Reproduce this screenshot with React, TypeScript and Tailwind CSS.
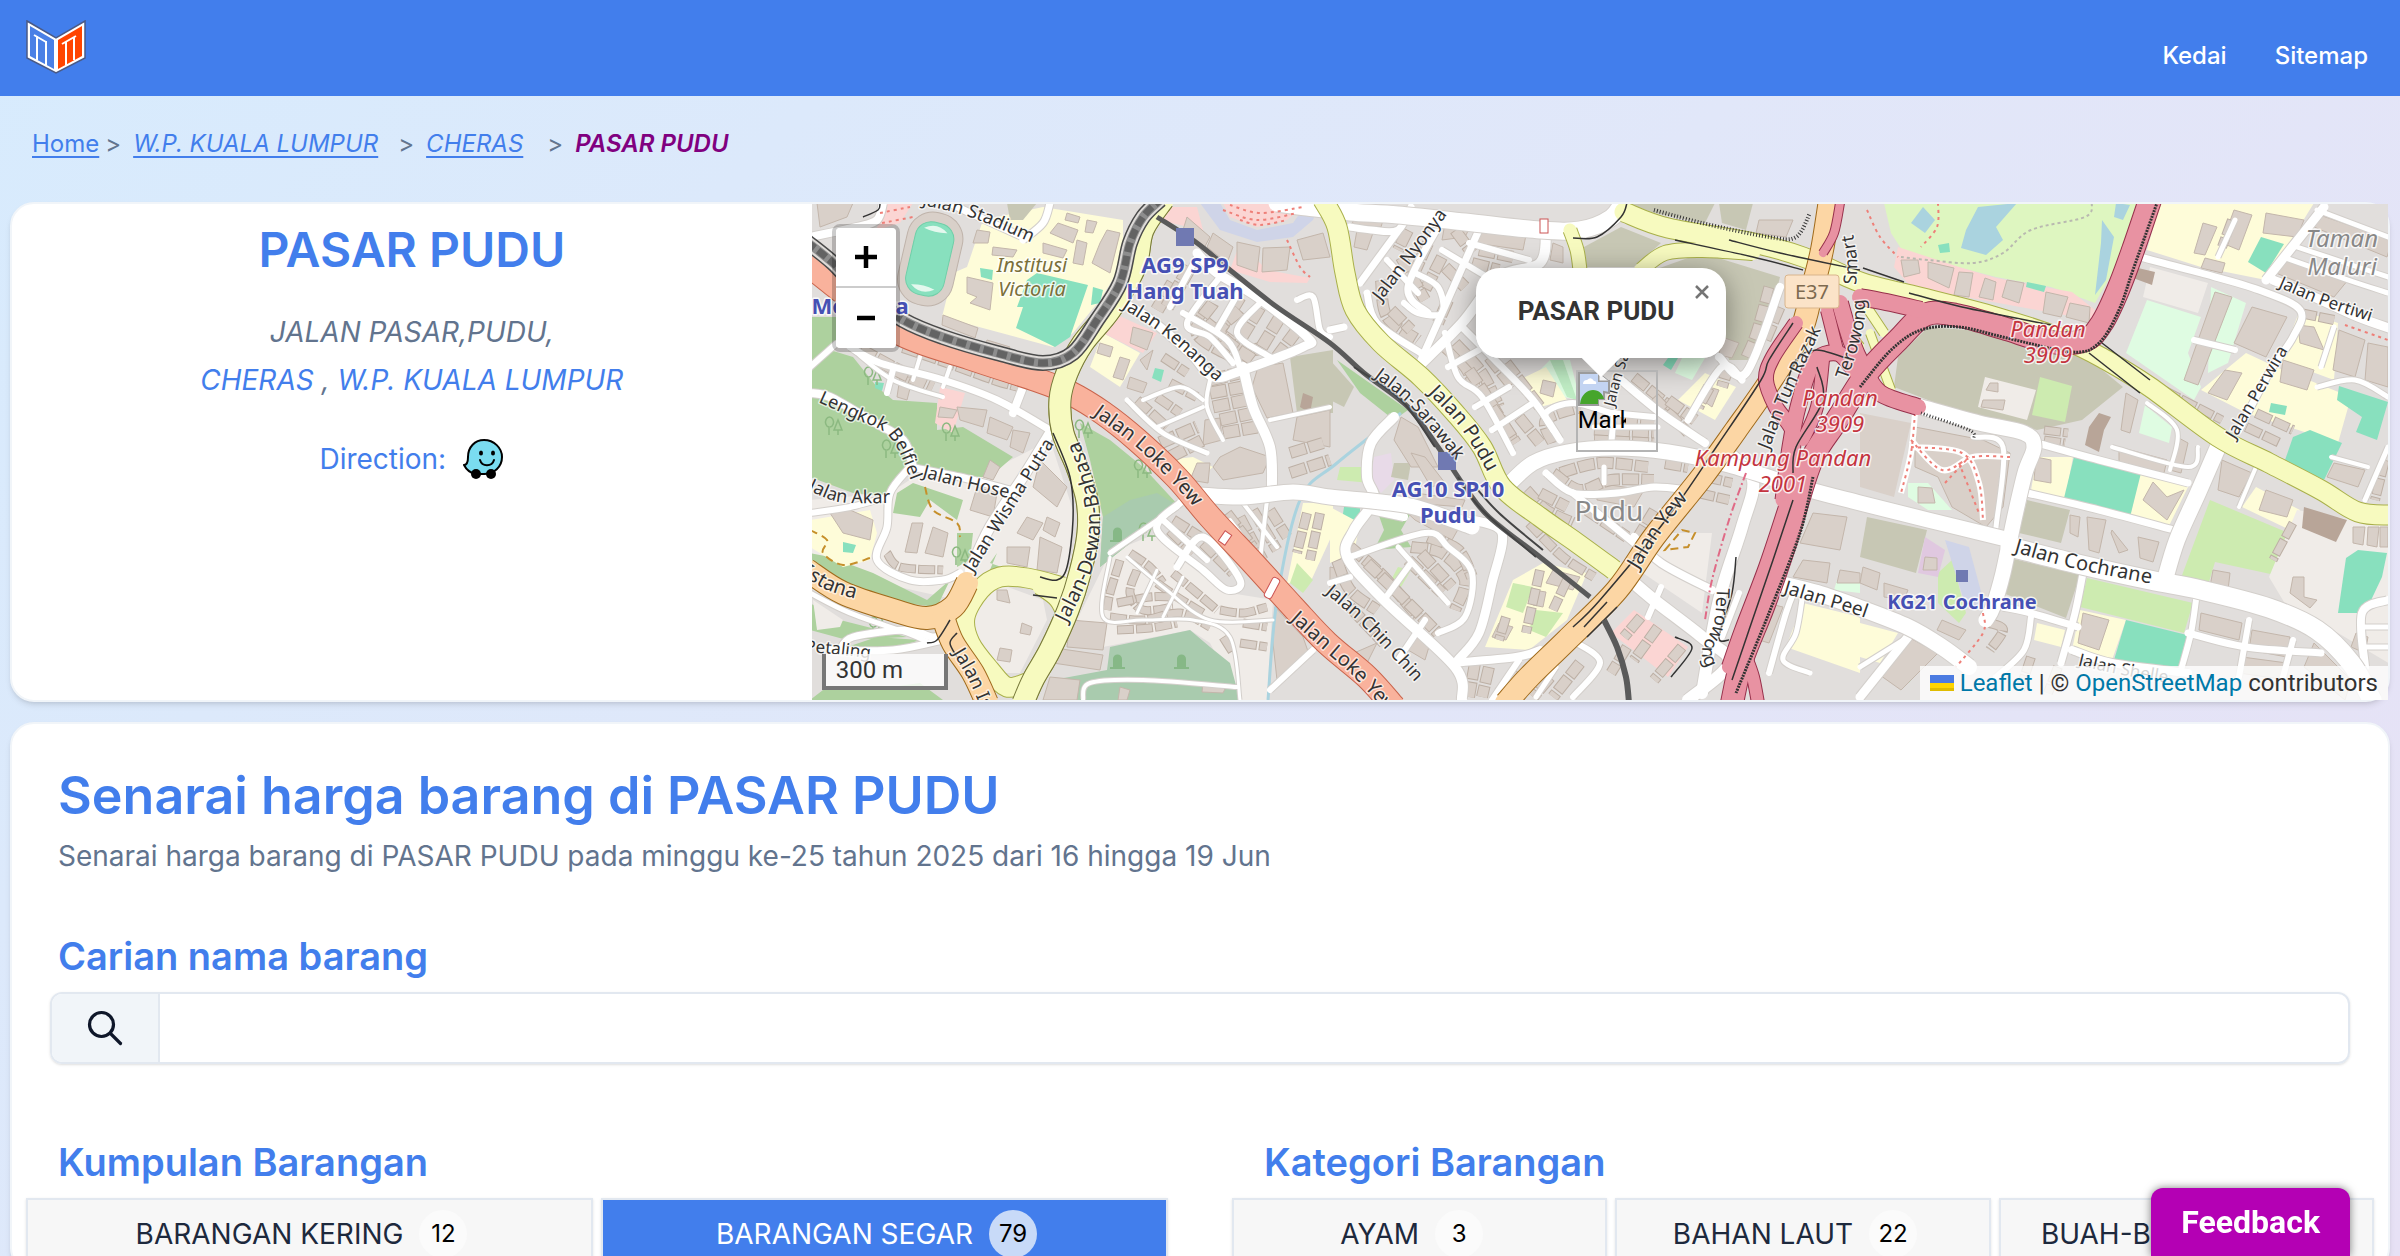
type Pt = [number, number];

const sheet =
  (originX: number, scaleX: number) =>
  (points: string): Pt[] =>
    points.split(" ").map((p) => {
      const [x, y] = p.split(",").map(Number);
      return [Math.round(originX + x * scaleX), Math.round(y / 3 - 4)];
    });

// The map is drawn from three adjoining sheets: west, centre and east.
const w = sheet(-2, 0.3333);
const m = sheet(518, 0.338);
const e = sheet(1048, 0.3412);

const poly = (pts: Pt[]) => "M" + pts.map((p) => p.join(" ")).join("L") + "Z";

const curve = (pts: Pt[]) => {
  let d = `M${pts[0][0]} ${pts[0][1]}`;
  for (let i = 0; i < pts.length - 1; i++) {
    const p0 = pts[i - 1] ?? pts[i];
    const p1 = pts[i];
    const p2 = pts[i + 1];
    const p3 = pts[i + 2] ?? p2;
    d += `C${p1[0] + (p2[0] - p0[0]) / 6} ${p1[1] + (p2[1] - p0[1]) / 6} ${p2[0] - (p3[0] - p1[0]) / 6} ${p2[1] - (p3[1] - p1[1]) / 6} ${p2[0]} ${p2[1]}`;
  }
  return d;
};

const PARK = "#add19e";
const CEMETERY = "#a9cbae";
const SCHOOL = "#fefcd9";
const PITCH = "#88e0be";
const BROWN = "#c7c7b4";
const GRASS = "#cdebb0";
const GARDEN = "#dffce2";
const GOLF = "#def6c0";
const WATER = "#aad3df";
const PINK = "#fbd5d3";
const PLAIN = "#f0ece8";
const BLOCK = "#d9d0c9";

const areas: [string, Pt[]][] = [
  [PLAIN, w("0,900 240,880 330,820 500,830 620,770 720,720 790,930 770,1130 560,1110 440,1200 0,1100")],
  [PLAIN, w("560,1150 700,1200 710,1260 630,1420 570,1420 490,1330 490,1240")],
  [PLAIN, w("900,1060 1040,1000 1260,1180 1390,1200 1370,1500 1290,1500 1200,1330 1140,1290 880,1340 800,1260")],
  [PARK, w("0,350 80,350 80,440 0,500")],
  [PARK, w("60,450 130,470 200,560 250,600 380,610 380,690 460,680 610,770 540,830 500,830 330,800 290,820 240,890 130,880 0,830 0,600 0,520")],
  [PARK, w("810,670 900,720 1000,800 1110,920 1000,1000 870,1100 880,950 840,780")],
  [CEMETERY, w("960,900 1040,880 1110,920 1000,1000 870,1100 880,950")],
  [CEMETERY, w("1140,1290 1200,1340 1260,1390 1290,1500 700,1500 730,1440 890,1410 900,1340")],
  [PARK, w("0,1060 60,1070 190,1120 350,1200 420,1140 380,1220 200,1200 0,1110")],
  [PARK, w("0,1210 90,1260 290,1310 110,1320 0,1290")],
  [PARK, w("110,1340 200,1310 330,1320 240,1350")],
  [PARK, w("40,1470 180,1470 330,1450 400,1500 0,1500")],
  [PARK, w("260,880 310,850 460,900 440,960 360,900 330,950 250,940")],
  [PARK, w("440,1000 490,1000 480,1080 440,1100")],
  [PARK, w("540,1090 600,1110 700,1130 640,1120 530,1130 560,1060")],
  [PLAIN, w("10,1200 100,1260 90,1280 20,1290")],
  [SCHOOL, w("470,200 520,60 700,20 940,60 940,190 870,300 790,400 730,440 395,350 430,220")],
  [SCHOOL, w("880,400 990,460 930,560 840,500")],
  [SCHOOL, w("0,960 180,930 200,1000 180,1080 100,1100 0,1040")],
  [SCHOOL, w("1070,780 1150,770 1210,800 1150,850 1100,830")],
  [PITCH, w("680,220 835,255 780,410 735,440 617,385 640,320 622,320 650,240")],
  [PITCH, w("850,260 880,270 870,310 842,315")],
  [PITCH, w("510,205 550,210 545,240 512,230")],
  [PITCH, w("1035,505 1062,510 1052,545 1026,535")],
  [PITCH, w("100,1025 138,1035 130,1060 98,1055")],
  [PITCH, w("195,545 222,550 215,572 195,565")],
  [PINK, w("1070,20 1160,20 1180,90 1040,60")],
  [PINK, w("1290,130 1370,210 1500,235 1490,250 1380,245 1260,210")],
  [PINK, w("390,560 465,580 430,700 375,670")],
  [PINK, w("910,340 1040,400 1000,460 880,400")],
  [PINK, w("210,10 310,10 270,70 200,90")],
  [BROWN, w("1440,470 1570,450 1570,640 1460,640")],
  [BROWN, w("590,10 680,10 640,60 600,60")],
  [SCHOOL, w("1480,910 1570,910 1570,1000 1500,1150 1430,1150")],
  [GRASS, w("1460,1090 1510,1140 1480,1180 1440,1150")],
  [BROWN, m("0,480 70,560 40,620 0,600")],
  [PARK, m("20,480 230,630 190,660 90,580")],
  ["#e8dae8", m("130,770 180,760 190,840 150,880 120,840")],
  [BROWN, m("190,790 240,790 230,840 180,830")],
  [GRASS, m("30,800 110,800 120,850 20,840")],
  [PITCH, m("40,920 90,920 90,965 35,960")],
  [SCHOOL, m("0,920 90,970 70,1060 0,1090")],
  [PARK, m("140,930 240,940 210,990 240,1040 130,1050 160,990")],
  [GRASS, m("200,1100 240,1110 210,1160 180,1140")],
  [GARDEN, m("650,480 710,480 740,600 690,590 620,510")],
  ["#bfecc4", m("650,480 690,480 730,600 700,590")],
  [SCHOOL, m("560,540 640,500 700,600 620,620")],
  [SCHOOL, m("1110,520 1200,560 1140,660 1030,600")],
  [PITCH, m("1000,475 1030,475 1010,510 985,495")],
  [GARDEN, m("1040,475 1110,475 1070,540 1020,520")],
  [BROWN, m("750,140 860,80 980,130 900,200 760,200")],
  [BROWN, m("880,10 1140,10 1110,70 960,40")],
  [BROWN, m("960,210 1100,160 1330,230 1270,480 1180,480 1160,400")],
  [BROWN, m("1150,10 1250,10 1230,90 1160,70")],
  [SCHOOL, m("630,1090 760,1120 700,1260 590,1350 460,1340 540,1140")],
  [GRASS, m("540,1150 600,1160 570,1240 520,1220")],
  [GRASS, m("610,1230 690,1240 640,1310 590,1290")],
  [PINK, m("900,1230 1060,1340 1000,1430 830,1300")],
  [PLAIN, m("900,1000 1130,1000 1100,1240 900,1100")],
  [SCHOOL, m("1400,1210 1568,1250 1568,1420 1350,1340")],
  [GARDEN, m("1500,1140 1568,1150 1568,1180 1490,1170")],
  [GOLF, e("70,10 860,10 690,310 560,260 400,230 130,160 90,100")],
  [WATER, e("185,20 220,60 190,100 150,70")],
  [WATER, e("345,20 460,10 400,80 420,120 370,165 295,145 310,90")],
  [WATER, e("710,60 745,110 720,240 690,285 705,130")],
  [WATER, e("750,10 790,15 770,60 745,50")],
  [PITCH, e("230,135 260,130 265,155 235,160")],
  [PINK, e("110,140 290,200 400,235 620,275 690,330 680,360 520,330 150,260 100,200")],
  [PITCH, e("490,245 545,258 540,276 487,262")],
  [SCHOOL, e("880,10 1330,10 1190,240 1000,200 840,150")],
  [PITCH, e("1175,112 1243,132 1190,220 1138,185")],
  [GARDEN, e("840,300 1000,350 960,460 1000,560 980,600 780,460")],
  [GARDEN, e("1030,260 1130,310 1080,490 1020,520")],
  [PLAIN, e("850,200 1020,250 990,340 830,290")],
  [SCHOOL, e("1130,460 1220,500 1440,590 1400,730 1130,640 1000,570")],
  [SCHOOL, e("1290,330 1400,370 1390,540 1230,480")],
  [PITCH, e("1405,558 1548,605 1515,720 1455,695 1470,650 1398,600")],
  [PITCH, e("1320,690 1412,730 1360,840 1245,780 1270,710")],
  [PITCH, e("1205,608 1250,618 1245,645 1200,635")],
  [BROWN, e("200,380 430,400 560,450 640,450 770,560 650,660 520,690 300,640 100,560 110,470")],
  [PLAIN, e("365,530 515,570 490,660 345,620")],
  [GRASS, e("528,532 620,558 600,665 503,645")],
  [GARDEN, e("835,615 915,680 905,730 818,700")],
  [SCHOOL, e("520,770 625,770 600,900 500,870")],
  [SCHOOL, e("820,820 960,860 900,990 790,950")],
  [PITCH, e("628,770 825,820 790,950 598,895")],
  [BROWN, e("490,900 615,930 590,1030 465,1000")],
  [BROWN, e("20,950 195,990 165,1120 0,1070")],
  [BROWN, e("440,1075 645,1125 605,1255 420,1180")],
  [GRASS, e("1025,900 1285,1010 1215,1125 1040,1085 1020,1155 940,1135")],
  [GRASS, e("665,1135 975,1210 950,1300 645,1220")],
  [SCHOOL, e("645,1230 780,1260 740,1380 620,1350")],
  [PITCH, e("780,1260 958,1305 930,1420 745,1380")],
  [SCHOOL, e("1160,860 1290,930 1260,990 1120,920")],
  [PLAIN, e("1280,930 1568,980 1568,1400 1400,1300 1250,1220 1200,1130")],
  [PITCH, e("1460,1050 1545,1060 1530,1130 1480,1240 1402,1240 1425,1075")],
  [GRASS, e("230,1120 270,1080 310,1240 290,1270 230,1210")],
  ["#e0c8e0", e("190,1010 250,1050 230,1130 170,1120")],
  [GARDEN, e("140,850 200,850 270,930 200,930 140,890")],
  [SCHOOL, e("0,1270 110,1300 60,1390 0,1370")],
  [SCHOOL, e("520,1270 600,1290 590,1340 510,1320")],
  ["#bff0c8", e("140,1380 185,1395 145,1450 105,1430")],
  ["#cfd4e8", e("250,1020 320,1040 370,1230 310,1220")],
  [BLOCK, e("0,640 150,670 100,890 0,860")],
  ["#cfd4e8", w("1170,10 1230,90 1340,125 1450,110 1510,60 1530,10 1490,10 1450,70 1340,90 1260,60 1230,10")],
  [PINK, w("1240,10 1490,10 1430,60 1340,80 1260,50")],
];

const buildings: Pt[][] = [
  w("20,10 130,10 110,50 30,80"),
  w("500,90 540,95 535,130 490,130"),
  w("550,140 620,150 610,170 545,165"),
  w("745,70 805,90 790,130 720,100"),
  w("700,130 770,150 760,175 700,160"),
  w("470,230 550,250 540,330 480,310 500,290 470,280"),
  w("800,120 830,130 820,195 790,190"),
  w("890,90 930,100 900,220 845,190 870,130"),
  w("830,60 860,65 850,100 825,95"),
  w("770,40 810,50 805,70 765,60"),
  w("400,345 505,385 495,415 395,375"),
  w("530,420 600,440 590,460 525,445"),
  w("1130,50 1200,110 1180,150 1120,90"),
  w("1210,100 1270,140 1250,190 1190,140"),
  w("1280,125 1350,140 1340,215 1280,195"),
  w("1360,145 1440,140 1430,210 1355,215"),
  w("1460,120 1540,100 1560,170 1480,180"),
  w("1345,500 1420,490 1450,640 1370,655 1325,560"),
  w("1185,660 1230,655 1235,720 1180,735"),
  w("1230,770 1290,740 1380,770 1360,820 1240,840 1210,800"),
  w("1160,790 1200,790 1195,850 1140,840"),
  w("1460,650 1560,630 1560,740 1450,720"),
  w("970,380 1030,400 1010,450 960,430"),
  w("990,480 1030,450 1010,510"),
  w("960,530 1010,550 1000,580 950,565"),
  w("930,470 960,480 940,540 910,530"),
  w("870,430 910,440 900,470 860,460"),
  w("440,620 530,630 520,680 450,660"),
  w("540,650 610,680 590,720 530,700"),
  w("610,690 660,700 640,760 600,740"),
  w("390,620 440,630 430,655 385,650"),
  w("500,860 560,880 550,950 480,930"),
  w("540,780 570,800 550,840 520,830"),
  w("690,780 770,860 740,920 670,860"),
  w("650,950 700,970 670,1020 620,1000"),
  w("710,950 750,970 735,1010 700,990"),
  w("590,1040 660,1040 650,1100 590,1090"),
  w("690,1010 755,1040 740,1120 680,1110"),
  w("305,970 340,970 320,1060 285,1055"),
  w("370,980 415,1000 400,1070 345,1060"),
  w("60,940 120,930 190,960 180,1020 100,1000"),
  w("270,530 310,530 290,600 260,590"),
  w("780,1260 890,1270 880,1350 770,1340"),
  w("735,1345 880,1365 870,1410 730,1390"),
  w("720,1430 810,1440 800,1500 700,1500"),
  w("1395,1220 1480,1310 1500,1370 1400,1440 1390,1330"),
  w("560,1170 590,1170 600,1210 560,1200"),
  w("635,1270 665,1280 660,1305 630,1300"),
  w("570,1345 605,1350 600,1385 560,1380"),
  w("930,1460 960,1470 950,1500 925,1500"),
  w("1180,1450 1250,1455 1240,1480 1175,1475"),
  m("70,50 160,50 150,80 65,75"),
  m("80,90 130,90 110,150 70,140"),
  m("340,70 420,70 400,110 330,120"),
  m("440,90 580,105 570,150 430,130"),
  m("660,130 690,140 690,190 650,180"),
  m("210,650 260,680 320,800 240,800 190,720"),
  m("240,760 280,770 340,850 300,860"),
  m("210,920 400,950 360,1020 250,960"),
  m("250,880 400,900 390,920 245,910"),
  m("1430,940 1530,950 1510,1050 1390,1030"),
  m("1400,1080 1480,1090 1470,1150 1370,1130"),
  m("1510,1110 1568,1120 1568,1150 1500,1150"),
  m("1290,1210 1340,1220 1300,1330 1270,1320"),
  m("250,1290 300,1320 280,1380 230,1350"),
  m("0,1100 40,1110 10,1180 0,1180"),
  m("70,1360 140,1330 110,1390"),
  m("1160,410 1210,430 1190,475 1150,465"),
  m("1270,60 1370,60 1350,110 1260,100"),
  m("790,850 930,870 900,920 790,900"),
  m("630,540 670,550 660,590 620,580"),
  m("1120,560 1150,570 1130,620 1100,600"),
  m("660,1110 740,1130 720,1170 640,1150"),
  m("600,1170 640,1175 630,1220 600,1215"),
  m("500,1270 540,1280 520,1320 480,1310"),
  e("120,180 170,180 175,220 130,230"),
  e("200,185 275,205 260,265 200,235"),
  e("290,215 330,220 320,290 275,285"),
  e("365,235 400,245 390,300 350,290"),
  e("430,240 480,250 465,310 415,290"),
  e("545,275 610,290 590,350 535,340"),
  e("615,310 675,320 670,370 605,350"),
  e("1040,275 1090,290 990,555 950,540"),
  e("1150,320 1250,350 1190,470 1095,430"),
  e("1405,390 1480,420 1450,530 1385,510"),
  e("1490,430 1548,440 1548,560 1480,540"),
  e("1070,510 1120,520 1075,600 1020,580"),
  e("1240,480 1330,510 1310,570 1230,545"),
  e("1285,375 1330,380 1360,450 1290,430"),
  e("1190,40 1300,60 1280,110 1180,100"),
  e("1095,30 1150,45 1110,150 1060,130"),
  e("1005,70 1045,80 1010,165 980,160"),
  e("1010,175 1070,190 1060,220 1000,205"),
  e("1240,180 1430,240 1390,290 1220,220"),
  e("1330,40 1560,120 1545,170 1330,80"),
  e("780,580 815,600 790,700 765,690"),
  e("760,740 900,780 890,820 760,790"),
  e("930,710 960,730 940,820 910,810"),
  e("160,680 360,720 440,760 420,920 370,980 270,920 230,830 160,800"),
  e("170,860 210,865 220,910 170,910"),
  e("515,770 560,780 560,850 510,840"),
  e("665,950 720,960 700,1060 670,1050"),
  e("740,990 785,1050 760,1060 735,1000"),
  e("815,1010 875,1025 860,1085 820,1075"),
  e("615,945 645,950 640,1010 615,1000"),
  e("860,845 900,890 950,870 900,960 830,900"),
  e("1060,780 1150,820 1110,890 1050,870"),
  e("1190,870 1270,900 1250,950 1170,930"),
  e("1390,790 1480,810 1460,860 1370,830"),
  e("1445,980 1480,980 1475,1035 1445,1030"),
  e("1490,980 1520,980 1515,1040 1485,1035"),
  e("1525,980 1548,980 1548,1040 1525,1040"),
  e("1035,1110 1085,1120 1080,1170 1025,1160"),
  e("1270,1130 1300,1130 1300,1190 1340,1200 1320,1225 1260,1180"),
  e("190,1070 225,1075 225,1110 185,1110"),
  e("380,550 405,550 405,575 370,570"),
  e("360,600 425,600 420,630 355,620"),
  e("240,1260 310,1290 290,1320 225,1290"),
  e("140,1310 230,1360 120,1470 50,1420"),
  e("1000,1240 1120,1270 1110,1320 995,1290"),
  e("1150,1290 1260,1310 1250,1370 1140,1350"),
  e("1120,1370 1250,1390 1250,1440 1110,1420"),
  e("1330,1330 1440,1440 1420,1500 1300,1400"),
  e("655,1240 730,1260 700,1350 640,1330"),
  e("10,1100 60,1120 50,1170 0,1150"),
  e("70,1150 140,1170 130,1200 70,1190"),
  e("1455,1300 1490,1310 1480,1360 1440,1340"),
];

const darkBuildings: Pt[][] = [
  e("700,640 735,650 715,690 700,755 660,735 670,680"),
  e("1300,920 1428,960 1395,1025 1295,985"),
  e("815,205 865,215 855,255 800,235"),
  w("1480,580 1510,590 1500,640 1470,620"),
];

const rows: [number, Pt[]][] = [
  [14, w("150,450 260,510 370,560")],
  [12, w("280,440 420,490 560,540 640,560")],
  [14, w("1090,250 1040,330")],
  [14, w("1140,200 1070,320")],
  [13, w("1140,330 1290,440 1370,440")],
  [13, w("1210,310 1160,400 1270,470")],
  [13, w("1290,290 1230,390")],
  [13, w("1350,320 1290,420")],
  [13, w("1410,350 1350,450")],
  [13, w("1460,390 1400,470")],
  [13, w("1290,330 1230,400 1330,480")],
  [13, w("1200,540 1290,520")],
  [13, w("1200,580 1300,560")],
  [13, w("1210,620 1310,600")],
  [13, w("1230,660 1330,640")],
  [13, w("1240,700 1340,680")],
  [13, w("1050,730 1160,680")],
  [13, w("1080,770 1180,720")],
  [10, w("1060,470 1130,520")],
  [10, w("1080,550 1160,590")],
  [10, w("980,600 1070,680")],
  [10, w("1040,590 1110,640")],
  [11, w("1290,950 1360,1080")],
  [11, w("1330,930 1400,1050")],
  [11, w("1380,930 1430,1010")],
  [11, w("1250,940 1330,1040")],
  [11, w("1180,1030 1270,1120")],
  [11, w("1080,990 1150,1060")],
  [11, w("1090,960 1170,1010")],
  [9, w("930,1080 900,1180 890,1230")],
  [9, w("960,1060 1020,1100 1060,1150")],
  [9, w("980,1110 960,1180 1000,1230 1090,1220")],
  [9, w("1090,1120 1160,1180 1220,1230")],
  [9, w("1040,1150 1100,1190 1180,1240")],
  [9, w("1240,1310 1270,1360")],
  [9, w("900,1250 1000,1260 1110,1240 1200,1280")],
  [9, w("920,1210 1020,1190 1080,1190")],
  [9, w("920,1290 1020,1285 1100,1270")],
  [9, w("1230,1230 1300,1240 1370,1220")],
  [9, w("1290,1330 1370,1340")],
  [9, w("1300,1270 1370,1280")],
  [9, w("230,1060 270,1100 400,1110")],
  [12, w("1440,820 1560,780")],
  [12, w("1440,760 1540,730")],
  [10, w("1490,940 1460,1060")],
  [10, w("1530,940 1500,1080")],
  [12, m("230,90 200,150")],
  [12, m("290,130 240,240")],
  [12, m("330,170 280,270")],
  [12, m("370,90 420,160")],
  [12, m("150,240 170,350 260,420")],
  [12, m("180,330 240,390")],
  [12, m("210,170 280,300")],
  [12, m("340,200 400,260")],
  [12, m("350,300 320,370")],
  [12, m("440,150 540,170")],
  [12, m("420,190 500,210")],
  [12, m("340,440 400,500 430,560")],
  [12, m("370,430 450,520 500,620")],
  [12, m("410,510 470,600 540,720")],
  [12, m("470,470 540,560")],
  [12, m("520,490 620,620")],
  [12, m("480,620 550,730")],
  [12, m("560,650 620,730")],
  [12, m("660,730 640,660 740,620")],
  [11, m("900,530 1010,620")],
  [11, m("860,660 960,670")],
  [11, m("780,690 960,700")],
  [11, m("780,720 960,730")],
  [11, m("960,590 1060,700")],
  [12, m("680,820 800,790 940,800")],
  [12, m("660,820 740,870 830,840 960,840")],
  [12, m("580,870 640,930 720,970")],
  [12, m("620,880 700,920")],
  [12, m("760,930 880,1010")],
  [12, m("990,790 1060,800")],
  [12, m("1000,600 1080,660")],
  [12, m("1120,560 1090,620")],
  [12, m("1180,490 1160,560")],
  [11, m("1300,260 1260,400 1230,470")],
  [11, m("1330,320 1290,420")],
  [12, m("60,1040 160,1130 260,1250")],
  [12, m("110,1090 200,1180 320,1300")],
  [12, m("240,1040 330,1060 400,1140 370,1230")],
  [12, m("290,1010 380,1050 420,1130")],
  [12, m("230,1080 330,1180")],
  [12, m("270,1060 360,1160")],
  [12, m("60,1220 160,1330")],
  [12, m("20,1080 60,1170 140,1230")],
  [12, m("430,1390 410,1490")],
  [12, m("470,1400 450,1490")],
  [12, m("560,1420 500,1480")],
  [12, m("650,1430 600,1490")],
  [12, m("740,1390 660,1490")],
  [10, m("590,970 690,1070 780,1130")],
  [10, m("620,1110 580,1300")],
  [10, m("700,1140 660,1230")],
  [10, m("520,1250 500,1320")],
  [11, m("960,930 900,1030")],
  [11, m("920,1250 870,1310")],
  [11, m("970,1280 900,1380")],
  [11, m("1040,1340 960,1440")],
  [11, m("880,1340 830,1420")],
  [10, m("1110,830 1190,850")],
  [10, m("1090,880 1180,900")],
  [10, e("1290,340 1390,360")],
  [10, e("1160,640 1270,690")],
  [10, e("1130,680 1230,730")],
  [9, e("890,570 1060,660")],
  [9, e("540,690 610,700")],
  [9, e("540,720 600,730")],
  [9, e("770,260 740,350")],
  [10, e("1090,60 1060,140")],
  [9, e("1270,970 1210,1080")],
  [10, e("380,1270 420,1290 380,1350")],
  [10, e("500,1370 470,1470")],
  [10, e("580,1400 550,1480")],
  [10, e("1540,780 1510,900")],
];

const lanes: [number, Pt[]][] = [
  [4, w("130,450 250,540 400,590")],
  [4, w("330,470 310,540")],
  [4, w("420,500 400,560")],
  [6, w("80,430 0,500")],
  [7, w("120,440 210,490 400,540 560,600 720,690")],
  [6, w("250,510 230,580")],
  [8, w("640,560 610,640")],
  [8, w("0,580 60,590 180,660 280,720 310,800")],
  [7, w("300,800 240,880 230,980 200,1080 300,1140 400,1140 450,1120")],
  [7, w("300,800 450,830 600,870")],
  [6, w("230,890 120,920 0,940")],
  [10, w("720,700 640,830 540,980 480,1110")],
  [5, w("0,1180 120,1240 290,1300 360,1330")],
  [7, w("90,1350 130,1310 290,1290 370,1310 420,1290")],
  [7, w("60,1350 250,1350 400,1320")],
  [5, w("900,1060 1100,920")],
  [7, w("1110,910 1040,990 1180,1110 1250,1170 1290,1140 1180,1010 1100,1100")],
  [6, w("1060,960 1190,1080")],
  [3, w("900,1070 880,1250 1000,1260 1150,1260 1260,1310 1290,1500")],
  [3, w("950,1070 1060,1160 1200,1260 1390,1260")],
  [3, w("1040,1110 980,1240")],
  [3, w("1120,1130 1060,1250")],
  [4, w("820,1500 840,1450 1000,1440 1280,1460")],
  [9, w("940,310 1010,350 1140,460 1210,530 1300,510 1480,440 1490,410 1340,290 1220,220 1160,160")],
  [6, w("1160,170 1080,320")],
  [6, w("1230,230 1130,370 1200,410 1270,490")],
  [6, w("1290,270 1220,390")],
  [6, w("1350,310 1280,400 1380,470")],
  [6, w("1120,340 1250,420 1290,500")],
  [10, w("1300,500 1330,620 1380,740 1385,860")],
  [4, w("1200,540 1190,620 1240,720")],
  [4, w("1000,600 1110,560 1180,600")],
  [4, w("1040,680 1180,620")],
  [4, w("1380,660 1560,620")],
  [5, w("950,600 1060,700 1190,760")],
  [6, w("1460,300 1510,290 1530,390 1560,410")],
  [8, w("0,110 140,80 200,60 220,10")],
  [7, w("640,120 700,70 720,10")],
  [7, w("420,10 480,40 640,110")],
  [4, w("1260,960 1390,1130")],
  [4, w("1300,910 1400,1040")],
  [4, w("1370,900 1350,1080")],
  [6, w("1380,1470 1510,1350")],
  [7, m("60,80 120,90 200,90 240,20")],
  [7, m("210,80 90,250")],
  [7, m("330,60 230,260 290,340")],
  [6, m("170,180 260,280")],
  [7, m("110,280 140,370 270,460")],
  [6, m("250,220 320,260 330,340 260,340 220,310")],
  [7, m("450,70 380,230 270,480")],
  [10, m("640,90 620,190 500,230 390,370 260,500")],
  [6, m("330,150 480,240")],
  [6, m("410,130 590,180")],
  [7, m("0,390 40,380")],
  [7, m("390,380 480,470 600,600 680,720")],
  [6, m("340,400 380,530 450,590 540,760")],
  [6, m("440,450 350,500")],
  [6, m("530,560 430,620")],
  [6, m("600,610 480,690")],
  [6, m("660,690 640,640 720,610 830,640")],
  [8, m("860,540 980,640 1110,730")],
  [6, m("830,640 960,650")],
  [5, m("780,680 970,680")],
  [6, m("840,640 830,740")],
  [7, m("1060,660 1160,500 1220,540")],
  [8, m("1150,470 1230,520 1330,260")],
  [7, m("640,820 720,880 850,880 960,860 1060,870")],
  [7, m("720,880 900,1030")],
  [5, m("810,800 810,850")],
  [10, m("190,650 120,730 110,830 130,900 70,990 50,1070 160,1200 370,1400 390,1500")],
  [8, m("120,930 220,950")],
  [6, m("60,1070 280,1000 350,1040 420,1120 400,1250 320,1300")],
  [5, m("200,1040 350,1210")],
  [6, m("160,1200 240,1090")],
  [9, m("420,960 510,1000 480,1150 440,1300 380,1380")],
  [6, m("0,1150 60,1130")],
  [6, m("200,1380 280,1260")],
  [8, m("360,1390 550,1370 620,1350")],
  [6, m("560,1380 480,1500")],
  [6, m("730,1330 800,1390 720,1490")],
  [5, m("670,1400 610,1490")],
  [12, m("880,1130 960,1200 1100,1310 1180,1390 1060,1500")],
  [8, m("900,1010 980,1090 1130,1170")],
  [6, m("980,1160 940,1250")],
  [12, m("1180,760 1250,840 1220,980 1150,1200 1100,1480")],
  [6, m("1210,1180 1160,1310")],
  [6, m("1380,1160 1350,1240 1300,1420")],
  [5, m("1400,1180 1380,1300 1340,1380 1420,1420")],
  [5, e("0,1400 140,1310")],
  [5, e("1100,60 1050,170")],
  [7, e("820,170 1000,220 1170,270 1290,330 1270,410 1200,520 1110,690")],
  [9, e("1210,240 1330,290 1460,350 1568,390")],
  [9, e("1190,240 1360,20")],
  [5, e("1340,30 1548,110")],
  [5, e("1280,140 1548,230")],
  [5, e("1240,170 1430,240 1548,280")],
  [6, e("980,420 1100,450")],
  [5, e("1340,560 1450,540 1548,590")],
  [5, e("1390,380 1350,500")],
  [5, e("1548,740 1480,900")],
  [4, e("1380,770 1490,800")],
  [7, e("520,730 700,780 960,850")],
  [7, e("490,880 700,930 920,990")],
  [4, e("740,740 960,800 990,740")],
  [4, e("840,610 930,690 910,810")],
  [4, e("1160,800 1110,920")],
  [7, e("655,1120 630,1240 590,1390")],
  [7, e("420,1220 500,1240 640,1280")],
  [6, e("500,1250 480,1350 400,1430")],
  [6, e("985,1200 970,1300 940,1410")],
  [7, e("960,1300 1130,1340 1350,1360")],
  [6, e("1140,1260 1110,1430")],
  [6, e("1270,1320 1240,1430")],
  [8, e("1480,1400 1470,1240 1548,1200")],
  [5, e("1480,1280 1548,1280")],
  [5, e("1480,1340 1548,1340")],
  [8, e("620,1350 740,1390 960,1420")],
  [9, e("0,1490 140,1310")],
  [5, e("330,710 420,740 400,980")],
];

const mainStreets: [number, Pt[]][] = [
  [15, [...w("1170,885 1300,890 1450,875"), ...m("0,890 150,905 260,925 420,980")]],
  [15, [...m("520,860 600,790 700,755 840,745 1000,755 1180,795 1400,865"), ...e("0,910 200,960 440,1020")]],
  [19, e("440,1040 650,1095 850,1140 1000,1170 1200,1225 1340,1290 1440,1390 1500,1500")],
  [15, e("180,620 350,670 480,700 510,740 485,820 450,960 420,1120 390,1220 370,1260")],
  [16, e("1050,740 990,880 930,1020 890,1150")],
  [16, [...m("1320,1150 1440,1180"), ...e("0,1225 140,1280 240,1340 320,1400")]],
  [17, [...w("1400,10 1490,20"), ...m("60,35 200,45 400,65 620,90 740,90 830,55 870,0")]],
  [12, m("0,60 60,30")],
];

const yellowRoads: [number, Pt[]][] = [
  [21, w("1060,0 1000,90 975,200 900,330 820,430 770,520 750,600 760,700 800,800 830,900 835,1000 810,1120 775,1230 720,1350 670,1440 640,1510")],
  [19, w("760,1160 650,1135 570,1130 510,1170 465,1250 480,1330 540,1410 590,1460 650,1450")],
  [15, w("690,1160 740,1200 770,1260")],
  [19, [...m("-20,0 20,80 45,220 75,330 150,430 270,530 370,640 450,740 510,860 620,950 730,1030 840,1110")]],
  [13, m("710,90 730,150 740,210")],
  [14, m("920,210 990,160 1100,150 1250,160")],
  [19, [...m("870,35 1000,85 1250,130 1400,170"), ...e("0,245 150,285 400,350 600,420 720,480 850,560 1050,710 1200,790 1350,870 1460,935 1560,945")]],
  [9, m("1480,330 1568,440")],
  [9, e("0,290 70,400")],
  [8, e("30,400 90,570")],
];

const trunkRoads: [number, Pt[]][] = [
  [23, [...w("-20,180 60,245 260,395 480,475 680,540 780,580 880,640 980,720 1100,835 1200,950 1330,1090 1450,1220"), ...m("-10,1330 110,1430 190,1520")]],
];

const trees = w("70,680 420,700 240,750 185,530 1010,1000 995,810 820,690 450,1070 200,1280");

const railSouth = [...w("1040,50 1160,130 1260,210 1400,320"), ...m("0,430 100,520 230,620 320,740 400,860 470,950 620,1070 770,1190")];
const railLoop = w("-10,125 70,190 150,270 280,360 400,410 560,460 700,490 790,460 860,360 930,250 960,130 1000,50 1050,0");

const orangeRoads: [number, Pt[]][] = [
  [22, w("-10,1110 100,1180 250,1230 350,1255 430,1220 470,1150")],
  [22, w("400,1250 430,1330 490,1420 530,1510")],
  [22, m("1480,0 1455,150 1425,270 1390,400 1300,550 1200,690 1100,830 960,1010 850,1170 700,1320 590,1430 520,1510")],
];

const redRoads: [number, Pt[]][] = [
  [22, [...e("850,0 800,150 755,270 710,370 660,420 560,425 420,385 280,345 190,345 110,420 20,520"), ...m("1500,660 1430,770 1380,920 1340,1050 1280,1220 1220,1380 1190,1510")]],
  [14, m("1380,370 1310,470 1290,540 1320,620 1370,700 1360,820")],
  [15, m("1340,900 1360,740 1385,620 1430,490 1500,460 1550,510")],
  [12, m("1460,480 1440,620 1400,720")],
  [12, m("1470,330 1500,450")],
  [16, e("0,290 90,310 180,330")],
  [16, [...m("1510,310 1540,420"), ...e("10,500 60,580 170,620")]],
  [14, m("1350,920 1290,1100 1220,1290 1180,1400")],
  [12, m("1230,1370 1250,1430 1265,1510")],
  [8, m("1510,10 1490,100 1460,160")],
];

function Strokes({ items, color, edge }: { items: [number, Pt[]][]; color: string; edge: string }) {
  return (
    <g fill="none" strokeLinejoin="round">
      {items.map(([width, pts], i) => (
        <path key={"e" + i} d={curve(pts)} stroke={edge} strokeWidth={width + 2} />
      ))}
      {items.map(([width, pts], i) => (
        <path key={"f" + i} d={curve(pts)} stroke={color} strokeWidth={width} strokeLinecap="round" />
      ))}
    </g>
  );
}

const streetLabels: [string, number, Pt[]][] = [
  ["Jalan Stadium", 18, w("335,15 480,50 680,135")],
  ["Jalan Kenanga", 18, w("935,325 1070,415 1230,555")],
  ["Jalan Loke Yew", 20, w("850,645 1000,760 1170,940")],
  ["Jalan Loke Yew", 20, [...w("1440,1260 1550,1360"), ...m("70,1430 170,1540")]],
  ["Lengkok Belfield", 18, w("25,605 130,655 240,710 305,850")],
  ["Jalan Hose", 18, w("335,830 450,860 620,900")],
  ["Jalan Akar", 18, w("-5,870 90,905 250,910")],
  ["Jalan Wisma Putra", 18, w("490,1120 570,990 650,860 760,690")],
  ["Jalan-Dewan-Bahasa", 20, w("770,1270 850,1100 870,960 845,830 780,650")],
  ["Istana", 20, w("-25,1125 50,1170 150,1200")],
  ["Petaling", 17, w("-15,1355 70,1362 170,1375")],
  ["Jalan Istana", 19, w("430,1360 480,1450 540,1590")],
  ["Jalan Nyonya", 18, m("150,305 230,200 345,45")],
  ["Jalan-Sarawak", 18, m("130,530 240,620 380,790")],
  ["Jalan Pudu", 20, m("290,580 390,690 480,840")],
  ["Jalan Yew", 20, m("910,1110 980,1000 1090,855")],
  ["Jalan Chin Chin", 18, m("-15,1180 100,1280 260,1455")],
  ["Jalan Tun Razak", 18, m("1300,750 1360,590 1470,350")],
  ["Terowong", 18, m("1145,1165 1135,1270 1100,1360 1140,1450")],
  ["Smart", 18, m("1555,255 1560,180 1545,80")],
  ["Terowong", 18, [...m("1530,540 1562,440"), ...e("15,340 0,230")]],
  ["Jalan Sayor", 15, m("840,620 860,540 890,450")],
  ["Jalan Peel", 19, [...m("1340,1180 1460,1215"), ...e("10,1250 80,1280")]],
  ["Jalan Cochrane", 20, e("450,1055 620,1105 840,1150")],
  ["Jalan Pertiwi", 17, e("1225,260 1350,315 1510,370")],
  ["Jalan Perwira", 17, e("1100,720 1170,600 1260,440")],
  ["Jalan Shelley", 17, e("640,1395 740,1420 900,1450")],
];

function CityMap() {
  return (
    <svg
      className="absolute inset-0 h-full w-full"
      viewBox="0 0 1577 496"
      preserveAspectRatio="xMinYMin slice"
      role="img"
      aria-label="Peta PASAR PUDU"
    >
      <rect width="1577" height="496" fill="#e1dedc" />
      {areas.map(([color, pts], i) => (
        <path key={i} d={poly(pts)} fill={color} />
      ))}
      <g transform="rotate(13 118 56)">
        <rect x="90" y="8" width="56" height="94" rx="26" fill={BLOCK} stroke="#bfb3aa" />
        <rect x="98" y="18" width="39" height="74" rx="16" fill={PITCH} stroke="#6fcfa8" />
        <path d="M105 26q12-9 24 0q-12 3-24 0M105 84q12 9 24 0q-12-3-24 0" fill="#e4f8ee" />
      </g>
      <g fill="none" stroke="#8cb981" strokeWidth="1.5">
        {trees.map(([x, y], i) => (
          <path key={i} d={`M${x - 4} ${y + 8}v-8a4 5 0 1 1 1 0M${x + 5} ${y + 8}v-5l-4 0l4-10l4 10h-4`} />
        ))}
      </g>
      <g fill="#86b886">
        <path d="M301 336v-8a4 4 0 0 1 9 0v8h3v2h-15v-2zM301 463v-8a4 4 0 0 1 9 0v8h3v2h-15v-2zM365 463v-8a4 4 0 0 1 9 0v8h3v2h-15v-2z" />
      </g>
      <g fill={BLOCK} stroke="#c3b6ab" strokeWidth="1">
        {buildings.map((pts, i) => (
          <path key={i} d={poly(pts)} />
        ))}
      </g>
      <g fill="#b8a598">
        {darkBuildings.map((pts, i) => (
          <path key={i} d={poly(pts)} />
        ))}
      </g>
      <g fill="none">
        {rows.map(([width, pts], i) => (
          <g key={i}>
            <path d={curve(pts)} stroke="#bdb0a5" strokeWidth={width} strokeDasharray="17 2" />
            <path d={curve(pts)} stroke={BLOCK} strokeWidth={width - 2} strokeDasharray="15 4" strokeDashoffset="-1" />
          </g>
        ))}
      </g>
      <path d={curve([...w("1375,1500 1400,1200 1470,900"), ...m("20,790 210,640")])} fill="none" stroke={WATER} strokeWidth="3" />
      <Strokes items={lanes} color="#ffffff" edge="#d3cfcb" />
      <Strokes items={mainStreets} color="#ffffff" edge="#d3cfcb" />
      <g fill="none" stroke="#ee7f78" strokeWidth="2" strokeDasharray="3 4">
        <path d={curve(e("160,640 150,760 120,880"))} stroke="#fff" strokeWidth="6" strokeDasharray="none" />
        <path d={curve(e("150,720 240,810 330,770 440,770"))} stroke="#fff" strokeWidth="6" strokeDasharray="none" />
        <path d={curve(e("150,740 300,760 350,850 360,960"))} stroke="#fff" strokeWidth="6" strokeDasharray="none" />
        <path d={curve(e("160,640 150,760 120,880"))} />
        <path d={curve(e("150,720 240,810 330,770 440,770"))} />
        <path d={curve(e("150,740 300,760 350,850 360,960"))} />
        <path d={curve(e("250,850 320,770"))} />
        <path d={curve(e("290,790 350,940"))} />
        <path d={curve(e("20,30 60,110 110,170"))} />
        <path d={curve(e("230,10 225,80 180,140"))} />
        <path d={curve(e("360,1240 360,1300 280,1400"))} />
        <path d={curve(e("1420,375 1548,420"))} />
        <path d={curve(w("1240,30 1340,60 1460,40"))} />
        <path d={curve(w("1260,15 1350,40 1480,20"))} />
        <path d={curve(w("1290,60 1350,75 1430,60"))} />
        <path d={curve(w("210,40 300,20"))} />
        <path d={curve(w("1430,120 1470,200 1500,230"))} />
        <path d={curve(w("215,70 310,50"))} />
      </g>
      <path d={curve(m("1230,820 1180,960 1130,1140 1110,1260"))} fill="none" stroke="#e06a86" strokeWidth="2" strokeDasharray="8 3 2 3" />
      <path d={curve(e("120,170 200,180 330,190 420,160 500,90 660,50 680,10"))} fill="none" stroke="#b9b9b0" strokeWidth="2" strokeDasharray="3 3" />
      <g fill="none" stroke="#c68f2a" strokeWidth="2" strokeDasharray="8 5">
        <path d={curve(w("345,860 370,930 440,970 450,1010"))} />
        <path d={curve(w("0,990 50,1020 40,1060 100,1095 180,1075"))} />
        <path d={poly(m("990,1050 1040,990 1080,1000 1060,1040"))} />
      </g>
      <Strokes items={yellowRoads} color="#f7fabf" edge="#a9b04a" />
      <Strokes items={trunkRoads} color="#f9b29c" edge="#c9644c" />
      <Strokes items={yellowRoads.slice(0, 1)} color="#f7fabf" edge="#77783a" />
      <Strokes items={orangeRoads} color="#fcd6a4" edge="#a06b1c" />
      <Strokes items={redRoads} color="#e892a2" edge="#97304b" />
      <g fill="none" stroke="#333" strokeWidth="1.5">
        <path d={curve(m("1370,900 1310,1080 1240,1290 1190,1440"))} />
        <path d={curve(m("1370,370 1300,480 1275,540 1150,730 1000,950 800,1200 720,1280"))} />
        <path d={curve(m("1350,560 1380,480 1440,450 1540,480"))} />
        <path d={curve(m("1440,500 1460,600 1380,740 1370,820"))} />
        <path d={curve(m("1020,120 1250,170 1400,210"))} />
        <path d={curve(m("1180,120 1330,160 1568,210"))} />
        <path d={curve(m("750,1280 820,1205"))} />
        <path d={curve(m("760,1310 850,1220"))} />
        <path d={curve(m("1200,1070 1190,1180 1150,1310 1180,1320"))} />
        <path d={curve(m("1020,1310 1070,1345 1010,1430"))} />
        <path d={curve(m("720,115 790,110 860,50 880,10"))} />
        <path d={curve(e("710,430 850,540"))} />
        <path d={curve(e("670,460 820,580"))} />
        <path d={curve(e("10,205 130,245"))} />
        <path d={curve(e("145,280 300,320 560,375"))} />
        <path d={curve(e("0,560 90,450 180,390 290,380 430,415 620,455 700,430 760,330 800,210 870,10"))} strokeWidth="3" strokeDasharray="2 1" />
        <path d={curve(e("180,640 320,690 335,715"))} strokeWidth="3" strokeDasharray="1 2" />
        <path d={curve(m("1430,830 1390,1000 1300,1240 1200,1480"))} strokeWidth="3" strokeDasharray="2 1" />
        <path d={curve(w("730,700 780,830 790,960 770,1100 740,1140 690,1130"))} />
        <path d={curve(w("670,1185 740,1195"))} />
        <path d={curve(w("420,1260 380,1320 350,1330"))} />
        <path d={curve(w("440,1300 420,1330 440,1370"))} />
        <path d={curve(m("960,30 1100,70 1300,110 1380,110 1420,40"))} strokeWidth="4" strokeDasharray="1 2" />
        <path d={curve(w("160,50 205,30 210,10"))} />
      </g>
      <g fill="none">
        <path d={curve(railLoop)} stroke="#4a4a4a" strokeWidth="16" />
        <path d={curve(railLoop)} stroke="#dedbd8" strokeWidth="13" />
        <path d={curve(railLoop)} stroke="#8d8d8d" strokeWidth="9" />
        <path d={curve(railLoop)} stroke="#636363" strokeWidth="7" strokeDasharray="10 4" />
        <path d={curve(railSouth)} stroke="#5a5a5a" strokeWidth="5" />
        <path d={curve(m("70,500 210,600 310,740"))} stroke="#444" strokeWidth="2" />
        <path d={curve(m("380,830 450,930 610,1070"))} stroke="#444" strokeWidth="2" />
        <path d={curve(m("420,850 500,940 630,1050"))} stroke="#444" strokeWidth="2" />
        <path d={curve(m("810,1260 850,1340 875,1430 885,1510"))} stroke="#5a5a5a" strokeWidth="6" />
      </g>
      <g fill="#fff" stroke="#c55" strokeWidth="1">
        <rect x="-4" y="-6" width="8" height="12" transform="translate(413 334) rotate(35)" />
        <rect x="-4" y="-11" width="8" height="22" rx="3" transform="translate(460 384) rotate(28)" />
        <rect x="-4" y="-7" width="8" height="14" transform="translate(732 22)" />
      </g>
      <g fill="#7079b2">
        <rect x="364" y="24" width="18" height="18" />
        <rect x="626" y="248" width="18" height="18" />
        <rect x="1144" y="366" width="12" height="12" />
      </g>
      <g
        fill="#333"
        stroke="#fff"
        strokeOpacity="0.65"
        strokeWidth="3"
        strokeLinejoin="round"
        paintOrder="stroke"
        className="font-['Noto_Sans',sans-serif]"
      >
        <defs>
          {streetLabels.map(([, , pts], i) => (
            <path key={i} id={"street" + i} d={curve(pts)} />
          ))}
        </defs>
        {streetLabels.map(([name, size], i) => (
          <text key={i} fontSize={size}>
            <textPath href={"#street" + i}>{name}</textPath>
          </text>
        ))}
      </g>
      <g
        textAnchor="middle"
        stroke="#fff"
        strokeOpacity="0.8"
        strokeWidth="3"
        strokeLinejoin="round"
        paintOrder="stroke"
        className="font-['Noto_Sans',sans-serif]"
      >
        <g fill="#4650b4" fontWeight="700" fontSize="22">
          <text x="373" y="69">AG9 SP9</text>
          <text x="373" y="95">Hang Tuah</text>
          <text x="636" y="293">AG10 SP10</text>
          <text x="636" y="319">Pudu</text>
          <text x="48" y="110">Merdeka</text>
          <text x="1150" y="405" fontSize="20">KG21 Cochrane</text>
        </g>
        <g fill="#7a6f3a" fontStyle="italic" fontSize="20">
          <text x="220" y="68">Institusi</text>
          <text x="220" y="92">Victoria</text>
        </g>
        <g fill="#888" fontSize="24">
          <text x="797" y="317" fontSize="28">Pudu</text>
          <text x="1530" y="43" fontStyle="italic">Taman</text>
          <text x="1530" y="71" fontStyle="italic">Maluri</text>
        </g>
        <g fill="#c4343f" fontStyle="italic" fontSize="22">
          <text x="1236" y="133">Pandan</text>
          <text x="1236" y="159">3909</text>
          <text x="1028" y="202">Pandan</text>
          <text x="1028" y="228">3909</text>
          <text x="971" y="262">Kampung Pandan</text>
          <text x="971" y="288">2001</text>
        </g>
      </g>
      <rect x="973" y="71" width="54" height="33" rx="3" fill="#fbe3c8" stroke="#d9b58c" />
      <text x="1000" y="95" textAnchor="middle" fontSize="20" fill="#7d6a50" className="font-['Noto_Sans',sans-serif]">
        E37
      </text>
    </svg>
  );
}

function Logo() {
  return (
    <svg viewBox="0 0 60 54" className="h-[54px] w-[60px]" aria-hidden="true">
      <path d="M1 1L30 18L59 1V38L30 53L1 38Z" fill="#fff" stroke="#4a5a86" strokeWidth="1.5" />
      <path d="M4 6L28 20V49L4 36Z" fill="#4a80e6" />
      <path d="M56 6L32 20V49L56 36Z" fill="#ff4500" />
      <path d="M11 40V16M8 15L20 22M20 45V21" fill="none" stroke="#fff" strokeWidth="2" />
      <path d="M40 45V22M36 24L50 16M48 40V17" fill="none" stroke="#fff" strokeWidth="2" />
    </svg>
  );
}

function Waze() {
  return (
    <svg viewBox="0 0 42 42" className="h-[42px] w-[42px]" aria-hidden="true">
      <path
        d="M22 2C32 2 40 10 40 19C40 29 32 36 22 36H14C8 35 4 31 2 27C5 27 6 24 6 19C6 9 13 2 22 2Z"
        fill="#7adcf0"
        stroke="#000"
        strokeWidth="2"
        strokeLinejoin="round"
      />
      <circle cx="14" cy="36" r="5" />
      <circle cx="29" cy="36" r="5" />
      <ellipse cx="19" cy="15" rx="2" ry="2.5" />
      <ellipse cx="31" cy="15" rx="2" ry="2.5" />
      <path d="M18 22C20 29 30 29 32 22" fill="none" stroke="#000" strokeWidth="2" strokeLinecap="round" />
    </svg>
  );
}

function Magnifier() {
  return (
    <svg viewBox="0 0 36 36" className="h-9 w-9" fill="none" stroke="#0f172a" strokeWidth="3.2" strokeLinecap="round" aria-hidden="true">
      <circle cx="14.5" cy="14.5" r="12" />
      <path d="M23.5 23.5L33.5 33.5" />
    </svg>
  );
}

function MissingPicture() {
  return (
    <svg viewBox="0 0 32 34" className="h-[34px] w-8" aria-hidden="true">
      <path d="M1 1H21V9H31V21L26 20V27H20V33H1Z" fill="#c3d4f2" stroke="#9b9b9b" strokeWidth="2" />
      <path d="M21 1V9H31Z" fill="#f4f4f4" stroke="#9b9b9b" />
      <path d="M5 12q0-4 4-4q4-4 7 1q3 0 2 3Z" fill="#fff" />
      <path d="M2 32C3 22 10 18 15 18C21 18 25 22 26 27H20V32Z" fill="#46a52c" />
    </svg>
  );
}

function Marker() {
  return (
    <div className="absolute top-[166px] left-[764px] h-[82px] w-[82px] border-2 border-[#b4b4b4]">
      <MissingPicture />
      <div className="w-[48px] overflow-hidden font-['Roboto',sans-serif] text-2xl leading-7 whitespace-nowrap text-black">
        Marker
      </div>
    </div>
  );
}

function MapPanel() {
  return (
    <div className="relative h-[496px] overflow-hidden font-['Roboto',sans-serif]">
      <CityMap />
      <div className="absolute top-[64px] left-[664px] h-[90px] w-[250px] rounded-3xl shadow-[0_6px_28px_rgba(0,0,0,0.4)]" />
      <Marker />
      <div className="absolute top-[64px] left-[664px] h-[90px] w-[250px]">
        <div className="absolute bottom-[-13px] left-[110px] h-[30px] w-[30px] rotate-45 bg-white" />
        <div className="relative flex h-full items-center rounded-3xl bg-white pr-10 pb-1 pl-[42px]">
          <strong className="text-[26px] leading-8 font-bold whitespace-nowrap text-[#333]">PASAR PUDU</strong>
        </div>
        <button aria-label="Close popup" className="absolute top-0 right-0 flex h-12 w-12 items-center justify-center">
          <svg viewBox="0 0 14 14" className="h-3.5 w-3.5" stroke="#757575" strokeWidth="2.5">
            <path d="M1 1L13 13M13 1L1 13" />
          </svg>
        </button>
      </div>
      <div className="absolute top-5 left-5 flex flex-col rounded-lg border-4 border-black/20 bg-clip-padding">
        <button aria-label="Zoom in" className="flex h-[60px] w-[60px] items-center justify-center rounded-t border-b-2 border-[#ccc] bg-white">
          <svg viewBox="0 0 22 22" className="h-[22px] w-[22px]" stroke="#000" strokeWidth="4.5">
            <path d="M11 0V22M0 11H22" />
          </svg>
        </button>
        <button aria-label="Zoom out" className="flex h-[60px] w-[60px] items-center justify-center rounded-b bg-white">
          <svg viewBox="0 0 22 22" className="h-[22px] w-[22px]" stroke="#000" strokeWidth="4.5">
            <path d="M2 11H20" />
          </svg>
        </button>
      </div>
      <div className="absolute bottom-[10px] left-[10px] flex h-9 w-[126px] items-center border-4 border-t-0 border-[#777] bg-white/80 px-2.5 text-2xl leading-8 text-[#333]">
        300 m
      </div>
      <div className="absolute right-0 bottom-0 flex h-[34px] items-center gap-1.5 bg-white/80 px-2.5 text-2xl leading-8 whitespace-nowrap text-[#333]">
        <svg viewBox="0 0 24 16" className="h-4 w-6" aria-hidden="true">
          <path d="M0 0h24v8H0z" fill="#4c7be1" />
          <path d="M0 8h24v8H0z" fill="#ffd500" />
          <path d="M0 13h24v3H0z" fill="#e0bc00" />
        </svg>
        <a href="#leaflet" className="text-[#0078a8]">
          Leaflet
        </a>
        <span>|</span>
        <span>©</span>
        <a href="#osm" className="text-[#0078a8]">
          OpenStreetMap
        </a>
        <span>contributors</span>
      </div>
    </div>
  );
}

function Tab({ label, count, active = false }: { label: string; count: number; active?: boolean }) {
  return (
    <button
      className={
        active
          ? "flex h-[72px] items-center justify-center gap-4 overflow-hidden border-2 border-slate-200 bg-[#427eec] pr-4 whitespace-nowrap text-white shadow-sm"
          : "flex h-[72px] items-center justify-center gap-4 overflow-hidden border-2 border-slate-200 bg-[#f7f7f7] pr-4 whitespace-nowrap text-slate-800 shadow-sm"
      }
    >
      <span className="text-[28px] leading-10">{label}</span>
      <span
        className={
          active
            ? "flex h-12 w-12 items-center justify-center rounded-full bg-[#c8daf8] text-2xl text-black"
            : "flex h-12 w-12 items-center justify-center rounded-full bg-[#fbfbfb] text-2xl text-black"
        }
      >
        {count}
      </span>
    </button>
  );
}

export default function App() {
  return (
    <div className="h-screen overflow-hidden bg-[linear-gradient(135deg,#d7ebfd_0%,#e1e7f9_50%,#e7e1f5_100%)] font-['Inter',sans-serif] text-[#427eec]">
      <header className="flex h-24 items-start justify-between bg-[#427eec] pt-5 pr-8 pl-[26px]">
        <a href="#home" aria-label="Laman utama">
          <Logo />
        </a>
        <nav className="flex gap-12 pt-5 text-2xl leading-8 font-medium text-white">
          <a href="#kedai">Kedai</a>
          <a href="#sitemap">Sitemap</a>
        </nav>
      </header>

      <nav aria-label="Breadcrumb" className="flex h-[106px] items-start px-8 pt-8 text-2xl leading-8">
        <a href="#home" className="underline underline-offset-4">
          Home
        </a>
        <span className="px-1.5 text-slate-500">&gt;</span>
        <a href="#wp" className="ml-1.5 italic underline underline-offset-4">
          W.P. KUALA LUMPUR
        </a>
        <span className="ml-3 px-2 text-slate-500">&gt;</span>
        <a href="#cheras" className="ml-1 italic underline underline-offset-4">
          CHERAS
        </a>
        <span className="ml-4 px-2 text-slate-500">&gt;</span>
        <span className="ml-1 font-semibold text-[#800080] italic">PASAR PUDU</span>
      </nav>

      <main className="flex flex-col gap-5 px-2.5">
        <section className="grid grid-cols-[800fr_1577fr] rounded-3xl border-2 border-slate-100 bg-white shadow-md">
          <div className="flex flex-col items-center pt-4 text-[28px]">
            <h1 className="text-5xl leading-[60px] font-semibold">PASAR PUDU</h1>
            <address className="mt-7 text-center leading-[48px] text-slate-500 italic">
              JALAN PASAR,PUDU,
              <br />
              <a href="#cheras" className="text-[#427eec]">
                CHERAS
              </a>{" "}
              ,{" "}
              <a href="#wp" className="text-[#427eec]">
                W.P. KUALA LUMPUR
              </a>
            </address>
            <p className="mt-[34px] flex items-center gap-4">
              Direction:
              <a href="#waze" aria-label="Waze">
                <Waze />
              </a>
            </p>
          </div>
          <MapPanel />
        </section>

        <section className="rounded-3xl border-2 border-slate-100 bg-white px-3.5 pt-11 shadow-md">
          <div className="px-8">
            <h2 className="text-[52px] leading-[56px] font-semibold">Senarai harga barang di PASAR PUDU</h2>
            <p className="mt-3 text-[28px] leading-[40px] text-slate-500">
              Senarai harga barang di PASAR PUDU pada minggu ke-25 tahun 2025 dari 16 hingga 19 Jun
            </p>
            <h3 className="mt-[54px] text-[38px] leading-[52px] font-semibold">
              <label htmlFor="carian">Carian nama barang</label>
            </h3>
          </div>
          <div className="mt-2.5 mr-6 ml-6 flex h-[72px] overflow-hidden rounded-xl border-2 border-slate-200 shadow-sm">
            <div className="flex w-[108px] items-center justify-center border-r-2 border-slate-200 bg-slate-100">
              <Magnifier />
            </div>
            <input id="carian" type="text" className="min-w-0 flex-1 px-6 text-[28px] text-slate-800 outline-none" />
          </div>
          <div className="mt-[72px] grid grid-cols-2 gap-16">
            <div>
              <h3 className="px-8 text-[38px] leading-[52px] font-semibold">Kumpulan Barangan</h3>
              <div className="mt-2.5 grid grid-cols-2 gap-2">
                <Tab label="BARANGAN KERING" count={12} />
                <Tab label="BARANGAN SEGAR" count={79} active />
              </div>
            </div>
            <div>
              <h3 className="px-8 text-[38px] leading-[52px] font-semibold">Kategori Barangan</h3>
              <div className="mt-2.5 grid grid-cols-3 gap-2">
                <Tab label="AYAM" count={3} />
                <Tab label="BAHAN LAUT" count={22} />
                <Tab label="BUAH-BUAHAN" count={18} />
              </div>
            </div>
          </div>
        </section>
      </main>

      <button className="fixed right-[50px] bottom-0 h-[68px] rounded-t-xl bg-[#b400b4] px-[30px] font-['Roboto',sans-serif] text-[32px] leading-[68px] font-bold text-white shadow-[0_0_8px_rgba(0,0,0,0.5)]">
        Feedback
      </button>
    </div>
  );
}
